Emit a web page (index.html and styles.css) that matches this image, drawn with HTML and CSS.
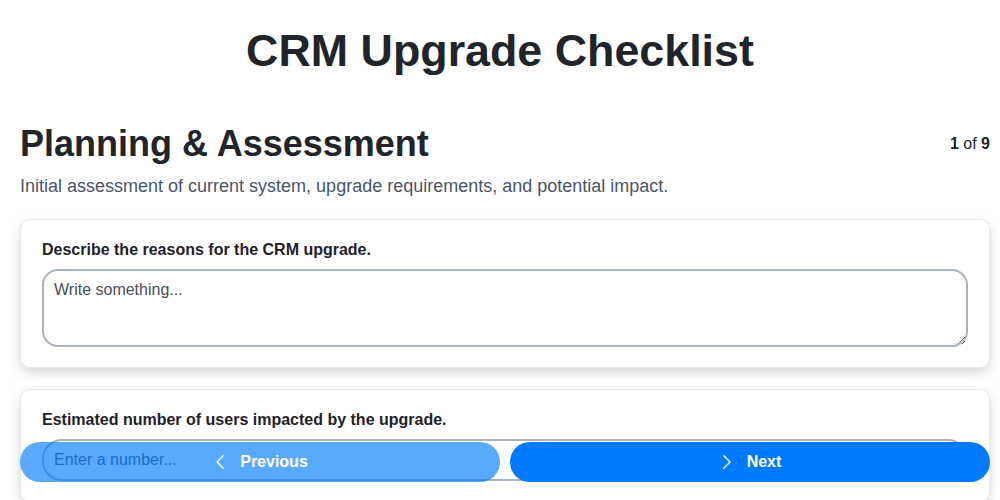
FILE: index.html
```html
<!DOCTYPE html>
<html lang="en">
<head>
<meta charset="utf-8">
<title>CRM Upgrade Checklist</title>
<link rel="stylesheet" href="styles.css">
</head>
<body>
<header class="header">
  <h1 class="title">CRM Upgrade Checklist</h1>
</header>
<main class="page">
  <section class="section">
    <div class="section-head">
      <h2 class="section-title">Planning &amp; Assessment</h2>
      <div class="counter"><b>1</b> of <b>9</b></div>
    </div>
    <p class="section-desc">Initial assessment of current system, upgrade requirements, and potential impact.</p>
    <div class="card">
      <label class="field-label" for="q1">Describe the reasons for the CRM upgrade.</label>
      <textarea id="q1" class="textarea" placeholder="Write something..."></textarea>
    </div>
    <div class="card">
      <label class="field-label" for="q2">Estimated number of users impacted by the upgrade.</label>
      <input id="q2" class="input" type="number" placeholder="Enter a number...">
    </div>
    <div class="card">
      <label class="field-label" for="q3">Current CRM version and vendor.</label>
      <input id="q3" class="input" type="text" placeholder="Write something...">
    </div>
  </section>
</main>
<nav class="nav">
  <button class="btn btn-prev" type="button">
    <svg class="chev" viewBox="0 0 16 16" width="16" height="16" aria-hidden="true"><path d="M11.2 1.8 L5 8 L11.2 14.2" fill="none" stroke="currentColor" stroke-width="1.3" stroke-linecap="round" stroke-linejoin="round"/></svg>
    <span>Previous</span>
  </button>
  <button class="btn btn-next" type="button">
    <svg class="chev" viewBox="0 0 16 16" width="16" height="16" aria-hidden="true"><path d="M4.8 1.8 L11 8 L4.8 14.2" fill="none" stroke="currentColor" stroke-width="1.3" stroke-linecap="round" stroke-linejoin="round"/></svg>
    <span>Next</span>
  </button>
</nav>
</body>
</html>
```

FILE: styles.css
```css
* { box-sizing: border-box; }
html, body {
  margin: 0;
  padding: 0;
  background: #ffffff;
  font-family: "Liberation Sans", Arial, sans-serif;
  color: #1f2328;
}
.header {
  padding: 24px 20px 0;
}
.title {
  margin: 0;
  font-size: 44.8px;
  line-height: 52px;
  font-weight: 700;
  text-align: center;
  color: #212529;
}
.page {
  padding: 0 10px 100px 20px;
}
.section {
  margin-top: 47px;
}
.section-head {
  display: flex;
  justify-content: space-between;
  align-items: center;
}
.section-title {
  margin: 0;
  font-size: 36px;
  line-height: 42px;
  font-weight: 700;
  color: #212529;
}
.counter {
  font-size: 16px;
  color: #212529;
}
.counter b { font-weight: 700; }
.section-desc {
  margin: 9px 0 21px;
  font-size: 18px;
  line-height: 24px;
  color: #4a5568;
}
.card {
  background: #fff;
  border: 1px solid #e6e8ec;
  border-radius: 10px;
  padding: 20px 21px 20px;
  margin-bottom: 21px;
  box-shadow: 0 5px 12px rgba(0, 0, 0, 0.16);
}
.field-label {
  display: block;
  font-size: 16px;
  line-height: 20px;
  font-weight: 700;
  color: #1f2328;
  margin-bottom: 9px;
}
.textarea, .input {
  display: block;
  width: 100%;
  border: 2px solid #a9b1bc;
  font-family: "Liberation Sans", Arial, sans-serif;
  font-size: 16px;
  color: #333;
  background: #fff;
  outline: none;
}
.textarea {
  height: 78px;
  border-radius: 16px;
  padding: 10px 10px;
  resize: vertical;
}
.input {
  height: 42px;
  border-radius: 20px;
  padding: 8px 10px;
}
.textarea::placeholder, .input::placeholder {
  color: #4a4f57;
  opacity: 1;
}
.nav {
  position: fixed;
  left: 20px;
  right: 10px;
  bottom: 18px;
  display: grid;
  grid-template-columns: 1fr 1fr;
  gap: 10px;
}
.btn {
  display: flex;
  align-items: center;
  justify-content: center;
  gap: 12px;
  height: 40px;
  border: none;
  border-radius: 20px;
  background: #007bff;
  color: #fff;
  font-family: "Liberation Sans", Arial, sans-serif;
  font-size: 16px;
  font-weight: 700;
  cursor: pointer;
}
.btn-prev { opacity: 0.65; }
.chev { display: block; }
```
